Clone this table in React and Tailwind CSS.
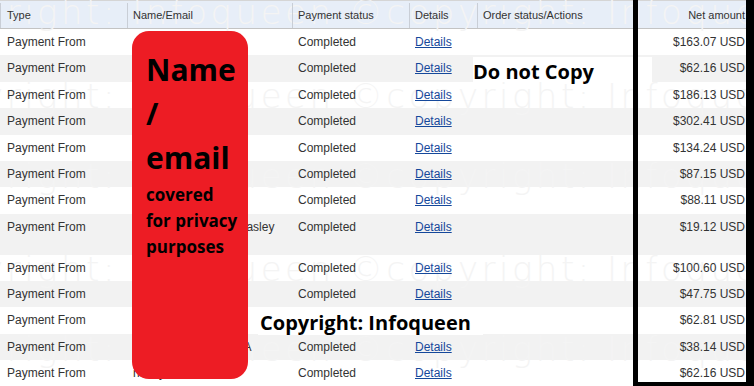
const payments = [
  { name: "", amount: "$163.07 USD" },
  { name: "", amount: "$62.16 USD" },
  { name: "", amount: "$186.13 USD" },
  { name: "", amount: "$302.41 USD" },
  { name: "", amount: "$134.24 USD" },
  { name: "", amount: "$87.15 USD" },
  { name: "", amount: "$88.11 USD" },
  { name: "Katherine Annette Beasley Richardson", amount: "$19.12 USD" },
  { name: "", amount: "$100.60 USD" },
  { name: "", amount: "$47.75 USD" },
  { name: "", amount: "$62.81 USD" },
  { name: "Jennifer Robinson, PA", amount: "$38.14 USD" },
  { name: "nancy.w@aol.com", amount: "$62.16 USD" },
];

// watermark bands, top to bottom
const bands = ["top-[-5px]", "top-[79px]", "top-[159px]", "top-[252px]", "top-[332px]"];

const cols = "grid grid-cols-[127px_165px_117px_68px_156px_121px]";

function HeaderRow() {
  const cell = "relative z-10 flex h-[25px] items-center border-l border-[#c9ced6] pl-[5px]";
  return (
    <div className="border-t border-t-[#d5d5d5] border-b border-b-[#c3c3c3] bg-[#e7eef8] pt-[2px]">
      <div className={`${cols} text-[11px] text-[#333]`}>
        <div className={cell + " pl-[6px]"}>Type</div>
        <div className={cell}>Name/Email</div>
        <div className={cell}>Payment status</div>
        <div className={cell}>Details</div>
        <div className={cell}>Order status/Actions</div>
        <div className={cell + " justify-end pr-[9px]"}>Net amount</div>
      </div>
    </div>
  );
}

function PaymentRow({ row, striped }) {
  const cell = "relative z-10 py-[6px] pl-[6px] leading-[14.4px]";
  return (
    <div className={`${cols} text-[12px] text-[#333] ${striped ? "bg-[#f2f2f2]" : "bg-white"}`}>
      <div className={cell + " pl-[7px]"}>Payment From</div>
      <div className={cell + " pr-[6px]"}>{row.name}</div>
      <div className={cell}>Completed</div>
      <div className={cell}>
        <a href="#" className="text-[#15489b] underline">Details</a>
      </div>
      <div className={cell}></div>
      <div className={cell + " pr-[9px] text-right"}>{row.amount}</div>
    </div>
  );
}

export default function App() {
  return (
    <div className="relative h-[386px] w-[754px] overflow-hidden bg-white font-['Liberation_Sans',Arial,sans-serif]">
      <HeaderRow />
      {payments.map((row, i) => (
        <PaymentRow key={i} row={row} striped={i % 2 === 1} />
      ))}

      {bands.map((top) => (
        <div
          key={top}
          className={`pointer-events-none absolute left-[-126px] ${top} whitespace-nowrap font-['DejaVu_Sans',sans-serif] text-[34px] font-extralight leading-[34px] tracking-[3.5px] text-[#f4f4f4] select-none`}
        >
          ©copyright: Infoqueen ©copyright: Infoqueen ©copyright: Infoqueen
        </div>
      ))}

      {/* privacy cover */}
      <div className="absolute left-[132px] top-[31px] z-20 h-[348px] w-[116px] rounded-[17px] bg-[#ed1c24] pl-[14px] pt-[17px] font-['Open_Sans',sans-serif] font-bold text-black">
        <div className="text-[30px] leading-[44px]">Name</div>
        <div className="text-[30px] leading-[44px]">/</div>
        <div className="text-[30px] leading-[44px]">email</div>
        <div className="mt-[2px] text-[17px] leading-[26px]">covered</div>
        <div className="text-[17px] leading-[26px]">for privacy</div>
        <div className="text-[17px] leading-[25px]">purposes</div>
      </div>

      <div className="absolute left-[473px] top-[57px] z-20 h-[25px] w-[179px] bg-white pt-[2px] font-['Open_Sans',sans-serif] text-[20px] font-bold leading-[25px] text-black">
        Do not Copy
      </div>

      <div className="absolute left-[258px] top-[309px] z-20 h-[26px] w-[225px] bg-white pl-[2px] pt-[1px] font-['Open_Sans',sans-serif] text-[20px] font-bold leading-[26px] text-black">
        Copyright: Infoqueen
      </div>

      {/* net amount highlight */}
      <div className="absolute left-[633px] top-[-4px] z-20 h-[390px] w-[121px] border-l-[5px] border-r-[8px] border-t-[4px] border-b-[4px] border-black"></div>
    </div>
  );
}
